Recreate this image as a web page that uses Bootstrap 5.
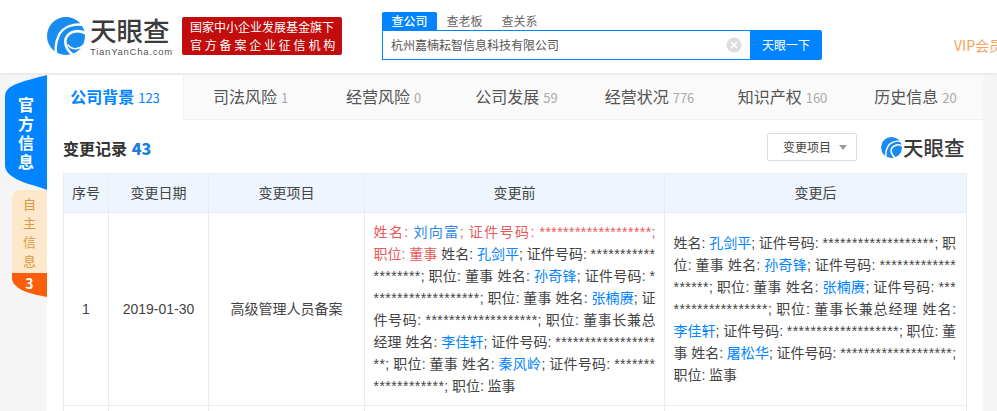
<!DOCTYPE html>
<html lang="zh">
  <head>
    <meta charset="UTF-8" />
    <title>变更记录</title>
    <link href="https://cdn.jsdelivr.net/npm/bootstrap@5.3.3/dist/css/bootstrap.min.css" rel="stylesheet" />
    <style>
      body {
        background-color: #f5f5f5;
        color: #333;
        font-family: "Noto Sans CJK SC", "Liberation Sans", sans-serif;
        font-size: 13px;
        width: 997px;
        height: 411px;
        overflow: hidden;
      }
      /* header */
      .top-head {
        height: 73px;
        background: #fff;
        box-shadow: 0 1px 3px rgba(0, 0, 0, 0.08);
        position: relative;
        padding-left: 47px;
        padding-top: 12px;
      }
      .top-head > * { flex: none; }
      .brand-mark { width: 38px; height: 38px; margin-top: 5px; }
      .brand-text { width: 80px; margin-left: 5px; margin-top: 1px; }
      .brand-name { font-size: 26.5px; font-weight: 500; line-height: 33px; color: #3b3b3b; white-space: nowrap; }
      .brand-url { font-family: "Liberation Sans", sans-serif; font-size: 9.5px; line-height: 12px; color: #555; letter-spacing: 0.75px; white-space: nowrap; }
      .red-tag {
        width: 160px;
        height: 38px;
        margin-left: 12px;
        margin-top: 5px;
        background: #c30d0d;
        border-radius: 2px;
        color: #fff;
        font-size: 12px;
        line-height: 18px;
        padding: 1px 0 0 8px;
        white-space: nowrap;
      }
      .red-tag .second-line { letter-spacing: 2.8px; }
      .search-box { width: 440px; margin-left: 40px; }
      .search-tabs { height: 18px; font-size: 12px; line-height: 18px; color: #666; }
      .search-tabs span { width: 55px; text-align: center; }
      .search-tabs .on { background: #0084ff; color: #fff; border-radius: 2px 2px 0 0; font-weight: 500; }
      .search-row { height: 30px; }
      .search-input {
        width: 368px;
        border: 1px solid #0084ff;
        border-right: 0;
        font-size: 12px;
        line-height: 28px;
        padding-left: 8px;
        padding-right: 8px;
        color: #555;
      }
      .search-btn { width: 72px; background: #0084ff; color: #fff; font-size: 12px; line-height: 30px; text-align: center; border-radius: 0 2px 2px 0; }
      .clear-x { width: 16px; height: 16px; }
      .vip-link { color: #f4a25c; font-size: 14px; line-height: 20px; margin-left: 132px; margin-top: 23px; white-space: nowrap; }
      /* side */
      .page-body { padding-top: 2px; }
      .side-col { width: 47px; flex: none; }
      .side-blue {
        height: 115px;
        margin-left: 5px;
        background: #0084ff;
        color: #fff;
        font-size: 16px;
        font-weight: 700;
        line-height: 19px;
        text-align: center;
        padding: 20px 0 0 0;
        clip-path: path("M42 0 L42 115 C30 110 16 108 8 102 C3 99 0 95 0 90 L0 22 C0 16 3 13 9 10 C18 6 30 3 42 0 Z");
      }
      .side-cream {
        height: 107px;
        margin-left: 12px;
        background: #fde8cb;
        color: #d99a45;
        font-size: 13px;
        line-height: 19px;
        text-align: center;
        padding-top: 4px;
        clip-path: path("M35 0 L35 107 C25 105 15 103 8 99 C3 96 0 92 0 88 L0 8 C0 4 3 2 6 0 C15 -1 25 -1 35 0 Z");
      }
      .side-count { height: 24px; margin-top: 3px; background: #f95e09; color: #fff; font-weight: 700; font-size: 14px; line-height: 21px; }
      /* main */
      .main-panel { width: 936px; height: 340px; background: #fff; overflow: hidden; }
      .tab-row { height: 45px; background: #fafafa; border-bottom: 1px solid #f0f0f0; }
      .tab-cell { width: 133px; text-align: center; font-size: 16px; line-height: 42px; color: #555; white-space: nowrap; }
      .tab-cell em { font-style: normal; font-size: 13px; color: #aaa; margin-left: 4px; }
      .tab-cell.on { width: 137px; height: 45px; background: #fff; color: #0084ff; font-weight: 700; border-right: 1px solid #f0f0f0; }
      .tab-cell.on em { color: #0084ff; font-weight: 400; }
      .title-row { height: 53px; padding: 13px 19px 0 16px; }
      .title-text { font-size: 16px; font-weight: 700; line-height: 30px; color: #333; }
      .title-text b { color: #1a7fdc; margin-left: 1px; }
      .pick-btn {
        width: 90px;
        height: 28px;
        border: 1px solid #ddd;
        border-radius: 2px;
        font-size: 12px;
        line-height: 26px;
        color: #444;
        padding-left: 15px;
      }
      .pick-arrow { width: 0; height: 0; border: 4px solid transparent; border-top: 5px solid #999; border-bottom: 0; margin-left: 8px; }
      .mini-logo { margin-left: 24px; width: 83px; flex: none; margin-top: 2px; }
      .mini-logo span { font-size: 20.5px; font-weight: 500; line-height: 24px; color: #3b3b3b; white-space: nowrap; }
      .mini-logo svg { width: 21px; height: 21px; flex: none; margin-right: 1px; }
      /* table */
      .change-table { width: 903px; margin: 0 0 0 16px; table-layout: fixed; border-collapse: collapse; font-family: "Liberation Sans", "Noto Sans CJK SC", sans-serif; font-size: 14px; }
      .change-table th, .change-table td { border: 1px solid #e8edf2; color: #444; text-align: center; vertical-align: middle; padding: 0 8.5px; font-weight: 400; white-space: nowrap; }
      .change-table th { background: #eef5fc; height: 39px; padding: 0; }
      .change-table td { height: 193px; }
      .change-table td.long-text { text-align: justify; line-height: 22px; word-break: break-all; word-spacing: -0.18px; white-space: normal; }
      .change-table td.after-text { padding-right: 9.9px; }
      .change-table a { color: #0084ff; text-decoration: none; }
      .removed { color: #e85a5a; }
      .removed a { color: #2b86e8; }
      .mask-no { letter-spacing: 0.45px; }
    </style>
  </head>
  <body>
    <!-- header -->
    <div class="top-head d-flex">
      <svg class="brand-mark" viewBox="0 0 38 38">
        <circle cx="19" cy="19" r="19" fill="#1a8cf0" />
        <g fill="none" stroke="#fff" stroke-linecap="round">
          <path d="M37 8C26 6 16 10 12 18C9 24 8 29 9 35" stroke-width="2.4" />
          <path d="M38 16C30 12 22 15 19 21C17 27 20 33 26 38" stroke-width="2.6" />
          <path d="M21 28C25 33 31 33 37 28" stroke-width="1.6" />
        </g>
      </svg>
      <div class="brand-text">
        <div class="brand-name">天眼查</div>
        <div class="brand-url">TianYanCha.com</div>
      </div>
      <div class="red-tag">
        <div>国家中小企业发展基金旗下</div>
        <div class="second-line">官方备案企业征信机构</div>
      </div>
      <div class="search-box">
        <div class="search-tabs d-flex">
          <span class="on">查公司</span>
          <span>查老板</span>
          <span>查关系</span>
        </div>
        <div class="search-row d-flex">
          <div class="search-input d-flex justify-content-between align-items-center">
            <span>杭州嘉楠耘智信息科技有限公司</span>
            <svg class="clear-x" viewBox="0 0 16 16">
              <circle cx="8" cy="8" r="7.5" fill="#ddd" />
              <path d="M5 5L11 11M11 5L5 11" stroke="#fff" stroke-width="1.6" />
            </svg>
          </div>
          <div class="search-btn">天眼一下</div>
        </div>
      </div>
      <div class="vip-link">VIP会员</div>
    </div>

    <div class="page-body d-flex">
      <!-- side tabs -->
      <div class="side-col">
        <div class="side-blue">官<br />方<br />信<br />息</div>
        <div class="side-cream">
          自<br />主<br />信<br />息
          <div class="side-count">3</div>
        </div>
      </div>

      <!-- main content -->
      <div class="main-panel">
        <div class="tab-row d-flex">
          <div class="tab-cell on">公司背景<em>123</em></div>
          <div class="tab-cell">司法风险<em>1</em></div>
          <div class="tab-cell">经营风险<em>0</em></div>
          <div class="tab-cell">公司发展<em>59</em></div>
          <div class="tab-cell">经营状况<em>776</em></div>
          <div class="tab-cell">知识产权<em>160</em></div>
          <div class="tab-cell">历史信息<em>20</em></div>
        </div>

        <div class="title-row d-flex align-items-start">
          <div class="title-text flex-grow-1">变更记录 <b>43</b></div>
          <div class="pick-btn d-flex align-items-center">变更项目<i class="pick-arrow"></i></div>
          <div class="mini-logo d-flex align-items-center">
            <svg viewBox="0 0 38 38">
              <circle cx="19" cy="19" r="19" fill="#1a8cf0" />
              <g fill="none" stroke="#fff" stroke-linecap="round">
                <path d="M37 8C26 6 16 10 12 18C9 24 8 29 9 35" stroke-width="2.6" />
                <path d="M38 16C30 12 22 15 19 21C17 27 20 33 26 38" stroke-width="2.8" />
              </g>
            </svg>
            <span>天眼查</span>
          </div>
        </div>

        <table class="change-table">
          <colgroup>
            <col style="width: 45px" />
            <col style="width: 100px" />
            <col style="width: 156px" />
            <col style="width: 300px" />
            <col style="width: 302px" />
          </colgroup>
          <thead>
            <tr>
              <th>序号</th>
              <th>变更日期</th>
              <th>变更项目</th>
              <th>变更前</th>
              <th>变更后</th>
            </tr>
          </thead>
          <tbody>
            <tr>
              <td>1</td>
              <td>2019-01-30</td>
              <td>高级管理人员备案</td>
              <td class="long-text"><span class="removed">姓名: <a href="#">刘向富</a>; 证件号码: <span class="mask-no">*******************</span>; 职位: 董事</span> 姓名: <a href="#">孔剑平</a>; 证件号码: <span class="mask-no">*******************</span>; 职位: 董事 姓名: <a href="#">孙奇锋</a>; 证件号码: <span class="mask-no">*******************</span>; 职位: 董事 姓名: <a href="#">张楠赓</a>; 证件号码: <span class="mask-no">*******************</span>; 职位: 董事长兼总经理 姓名: <a href="#">李佳轩</a>; 证件号码: <span class="mask-no">*******************</span>; 职位: 董事 姓名: <a href="#">秦风岭</a>; 证件号码: <span class="mask-no">*******************</span>; 职位: 监事</td>
              <td class="long-text after-text">姓名: <a href="#">孔剑平</a>; 证件号码: <span class="mask-no">*******************</span>; 职位: 董事 姓名: <a href="#">孙奇锋</a>; 证件号码: <span class="mask-no">*******************</span>; 职位: 董事 姓名: <a href="#">张楠赓</a>; 证件号码: <span class="mask-no">*******************</span>; 职位: 董事长兼总经理 姓名: <a href="#">李佳轩</a>; 证件号码: <span class="mask-no">*******************</span>; 职位: 董事 姓名: <a href="#">屠松华</a>; 证件号码: <span class="mask-no">*******************</span>; 职位: 监事</td>
            </tr>
            <tr>
              <td></td>
              <td></td>
              <td></td>
              <td></td>
              <td></td>
            </tr>
          </tbody>
        </table>
      </div>
    </div>
    <script src="https://cdn.jsdelivr.net/npm/bootstrap@5.3.3/dist/js/bootstrap.bundle.min.js"></script>
  </body>
</html>
